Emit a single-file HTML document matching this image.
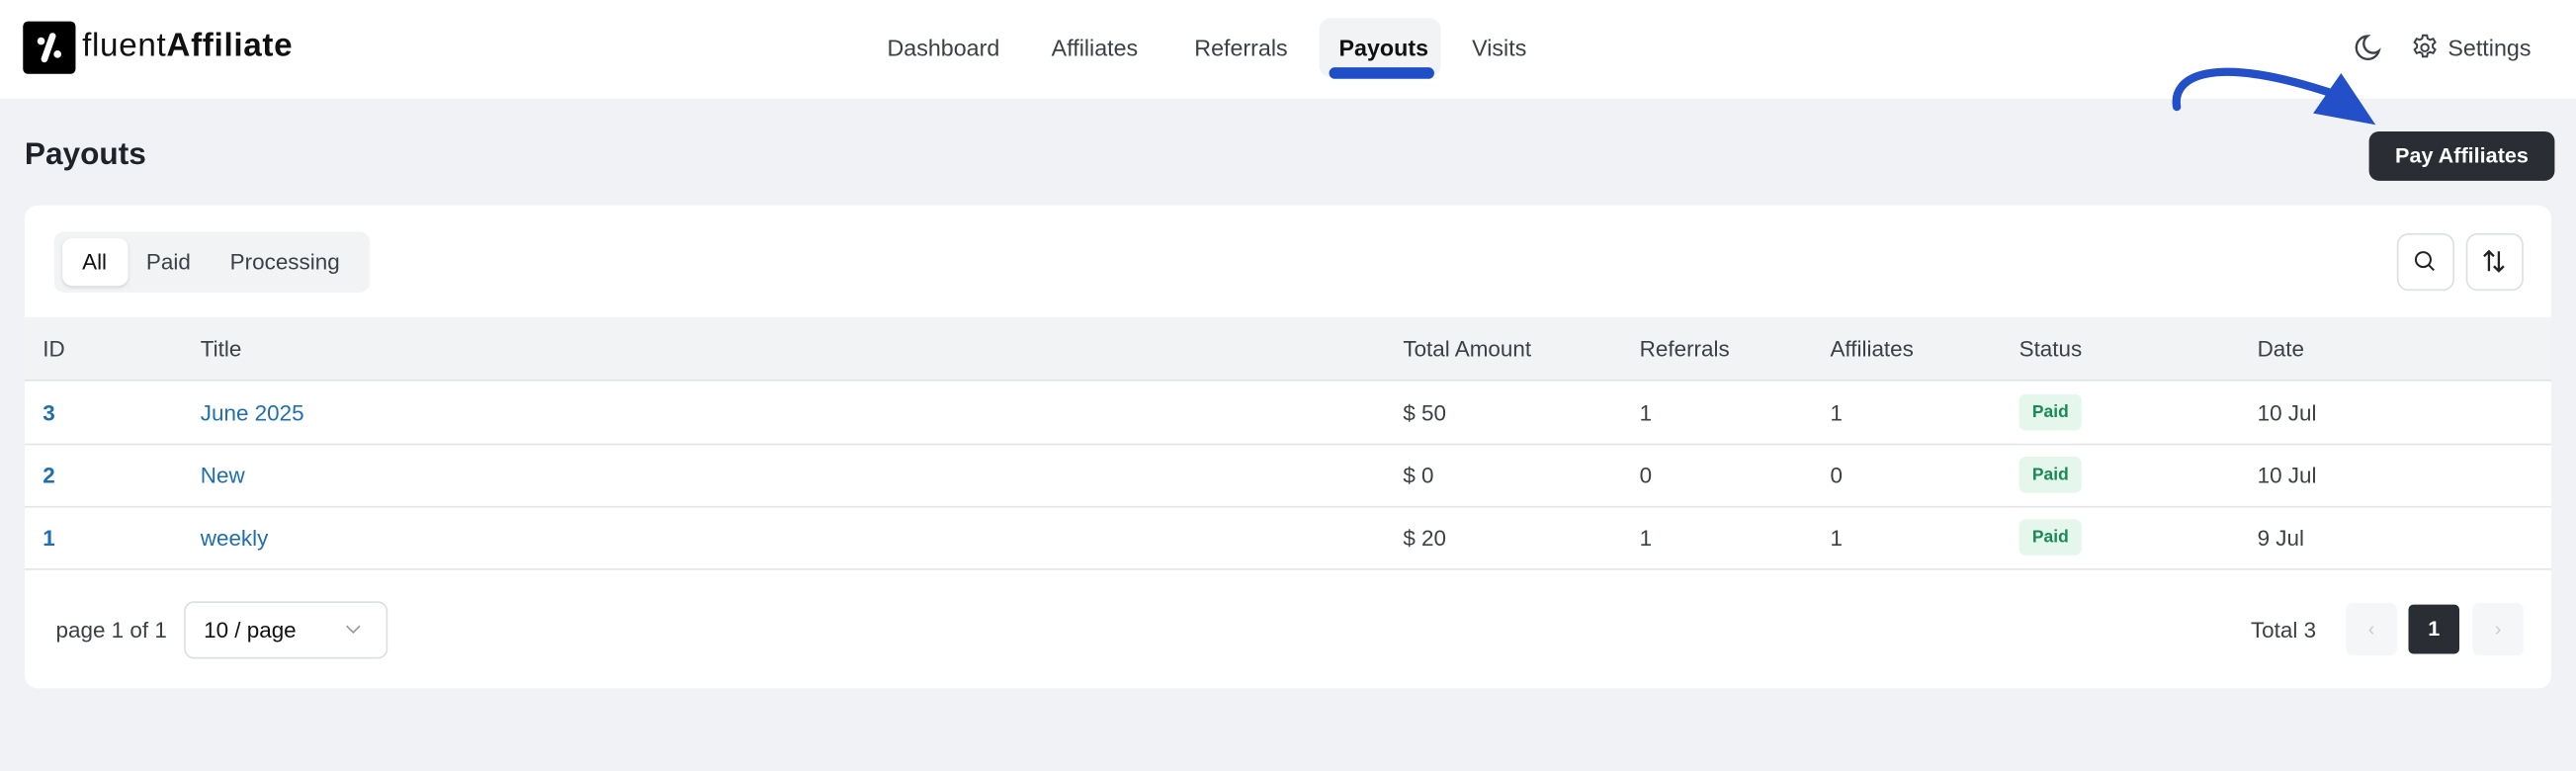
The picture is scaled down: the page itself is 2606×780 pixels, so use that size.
<!DOCTYPE html>
<html><head><meta charset="utf-8"><style>
html,body{margin:0;padding:0;width:2606px;height:780px;overflow:hidden;background:#f0f2f5;font-family:"Liberation Sans",sans-serif;}
#w{position:absolute;left:0;top:0;width:1568px;height:469px;transform:scale(1.662);transform-origin:0 0;color:#1f2329;}
.a{position:absolute;white-space:nowrap;}
.hdr{position:absolute;left:0;top:0;width:1568px;height:60px;background:#fff;}
.nav{font-size:14px;color:#3b3f46;top:21px;}
.card{position:absolute;left:15px;top:125px;width:1538px;height:294px;background:#fff;border-radius:8px;}
.th{position:absolute;left:15px;top:193px;width:1538px;height:38px;background:#f1f3f5;border-bottom:1px solid #dfe2e6;}
.row{position:absolute;left:15px;width:1538px;height:38px;border-bottom:1px solid #e3e5e8;}
.t{font-size:13.5px;color:#3b3f46;}
.lnk{color:#1e6fb0;}
.badge{position:absolute;background:#e5f6ed;color:#1a8a55;font-size:10.5px;font-weight:bold;border-radius:4px;padding:5px 8px;}
.ib{position:absolute;width:33px;height:33px;border:1px solid #dcdfe4;border-radius:7px;background:#fff;}
</style></head><body><div id="w">
<div class="hdr"></div>
<div class="a" style="left:14px;top:13px;width:32px;height:32px;background:#000;border-radius:3px;"></div>
<svg class="a" style="left:14px;top:13px" width="32" height="32" viewBox="0 0 32 32"><path d="M18 9 L13 23" stroke="#fff" stroke-width="4" stroke-linecap="round"/><circle cx="11" cy="12" r="2.3" fill="#fff"/><circle cx="21" cy="20" r="2.3" fill="#fff"/></svg>
<div class="a" style="left:50px;top:17px;font-size:20px;letter-spacing:0.4px;color:#111">fluent<span style="font-weight:bold">Affiliate</span></div>
<div class="a nav" style="left:540px">Dashboard</div>
<div class="a nav" style="left:640px">Affiliates</div>
<div class="a nav" style="left:727px">Referrals</div>
<div class="a" style="left:803px;top:11px;width:74px;height:36px;background:#f1f3f5;border-radius:7px;"></div>
<div class="a" style="left:809px;top:41px;width:64px;height:7px;background:#1f4fc7;border-radius:4px;"></div>
<div class="a nav" style="left:815px;color:#111;font-weight:bold;">Payouts</div>
<div class="a nav" style="left:896px">Visits</div>
<svg class="a" style="left:1430px;top:19px" width="20" height="20" viewBox="0 0 20 20"><path d="M11 3 A7 7 0 1 0 18 12 A5.5 5.5 0 0 1 11 3Z" fill="none" stroke="#3b3f46" stroke-width="1.4"/></svg>
<svg class="a" style="left:1467px;top:20px" width="18" height="18" viewBox="0 0 24 24" fill="none" stroke="#3b3f46" stroke-width="1.6"><circle cx="12" cy="12" r="3"/><path d="M10.3 2h3.4l.5 2.6 2 1.1 2.5-.9 1.7 2.9-2 1.8v2.3l2 1.8-1.7 2.9-2.5-.9-2 1.1-.5 2.6h-3.4l-.5-2.6-2-1.1-2.5.9-1.7-2.9 2-1.8V9.5l-2-1.8 1.7-2.9 2.5.9 2-1.1z"/></svg>
<div class="a nav" style="left:1490px">Settings</div>
<div class="a" style="left:15px;top:84px;font-size:19px;font-weight:bold;">Payouts</div>
<div class="a" style="left:1442px;top:80px;width:113px;height:30px;background:#2a2d33;border-radius:6px;color:#fff;font-weight:bold;font-size:13px;text-align:center;line-height:30px;">Pay Affiliates</div>
<div class="card"></div>
<svg class="a" style="left:1300px;top:20px" width="160" height="70" viewBox="0 0 160 70"><path d="M25 45 C22 27 45 12 120 37" fill="none" stroke="#2350c8" stroke-width="5" stroke-linecap="round"/><path d="M125 24.5 L146 56 L108 49Z" fill="#2350c8"/></svg>
<div class="a" style="left:33px;top:141px;width:192px;height:37px;background:#f2f3f5;border-radius:6px;"></div>
<div class="a" style="left:38px;top:145px;width:40px;height:29px;background:#fff;border-radius:6px;box-shadow:0 1px 2px rgba(0,0,0,.12);"></div>
<div class="a t" style="left:50px;top:152px;color:#111">All</div>
<div class="a t" style="left:89px;top:152px">Paid</div>
<div class="a t" style="left:140px;top:152px">Processing</div>
<div class="ib" style="left:1459px;top:142px"></div>
<svg class="a" style="left:1469px;top:152px" width="14" height="14" viewBox="0 0 14 14" fill="none" stroke="#222" stroke-width="1.2"><circle cx="6" cy="6" r="4.5"/><path d="M9.3 9.3 L12.5 12.5"/></svg>
<div class="ib" style="left:1501px;top:142px"></div>
<svg class="a" style="left:1510px;top:151px" width="16" height="16" viewBox="0 0 16 16" fill="none" stroke="#222" stroke-width="1.4"><path d="M5 14V2M2 5l3-3 3 3M11 2v12M8 11l3 3 3-3"/></svg>
<div class="th"></div>
<div class="a t" style="left:26px;top:205px">ID</div>
<div class="a t" style="left:122px;top:205px">Title</div>
<div class="a t" style="left:854px;top:205px">Total Amount</div>
<div class="a t" style="left:998px;top:205px">Referrals</div>
<div class="a t" style="left:1114px;top:205px">Affiliates</div>
<div class="a t" style="left:1229px;top:205px">Status</div>
<div class="a t" style="left:1374px;top:205px">Date</div>
<div class="row" style="top:232px"></div>
<div class="row" style="top:270px"></div>
<div class="row" style="top:308px"></div>
<div class="a t lnk" style="left:26px;top:244px;font-weight:bold">3</div>
<div class="a t lnk" style="left:122px;top:244px">June 2025</div>
<div class="a t" style="left:854px;top:244px">$ 50</div>
<div class="a t" style="left:998px;top:244px">1</div>
<div class="a t" style="left:1114px;top:244px">1</div>
<div class="badge" style="left:1229px;top:240px">Paid</div>
<div class="a t" style="left:1374px;top:244px">10 Jul</div>
<div class="a t lnk" style="left:26px;top:282px;font-weight:bold">2</div>
<div class="a t lnk" style="left:122px;top:282px">New</div>
<div class="a t" style="left:854px;top:282px">$ 0</div>
<div class="a t" style="left:998px;top:282px">0</div>
<div class="a t" style="left:1114px;top:282px">0</div>
<div class="badge" style="left:1229px;top:278px">Paid</div>
<div class="a t" style="left:1374px;top:282px">10 Jul</div>
<div class="a t lnk" style="left:26px;top:320px;font-weight:bold">1</div>
<div class="a t lnk" style="left:122px;top:320px">weekly</div>
<div class="a t" style="left:854px;top:320px">$ 20</div>
<div class="a t" style="left:998px;top:320px">1</div>
<div class="a t" style="left:1114px;top:320px">1</div>
<div class="badge" style="left:1229px;top:316px">Paid</div>
<div class="a t" style="left:1374px;top:320px">9 Jul</div>
<div class="a t" style="left:34px;top:376px">page 1 of 1</div>
<div class="a" style="left:112px;top:366px;width:122px;height:33px;border:1px solid #dcdfe4;border-radius:6px;"></div>
<div class="a t" style="left:124px;top:376px;color:#111">10 / page</div>
<svg class="a" style="left:209px;top:379px" width="12" height="8" viewBox="0 0 12 8" fill="none" stroke="#999" stroke-width="1"><path d="M2 2l4 4 4-4"/></svg>
<div class="a t" style="left:1370px;top:376px">Total 3</div>
<div class="a" style="left:1428px;top:367px;width:31px;height:32px;background:#f5f6f8;border-radius:4px;"></div>
<div class="a" style="left:1428px;top:376px;width:31px;text-align:center;color:#ccc;font-size:12px;">&#8249;</div>
<div class="a" style="left:1466px;top:368px;width:31px;height:30px;background:#2a2d33;border-radius:3px;color:#fff;font-weight:bold;font-size:13px;text-align:center;line-height:30px;">1</div>
<div class="a" style="left:1505px;top:367px;width:31px;height:32px;background:#f5f6f8;border-radius:4px;"></div>
<div class="a" style="left:1505px;top:376px;width:31px;text-align:center;color:#ccc;font-size:12px;">&#8250;</div>
</div></body></html>
